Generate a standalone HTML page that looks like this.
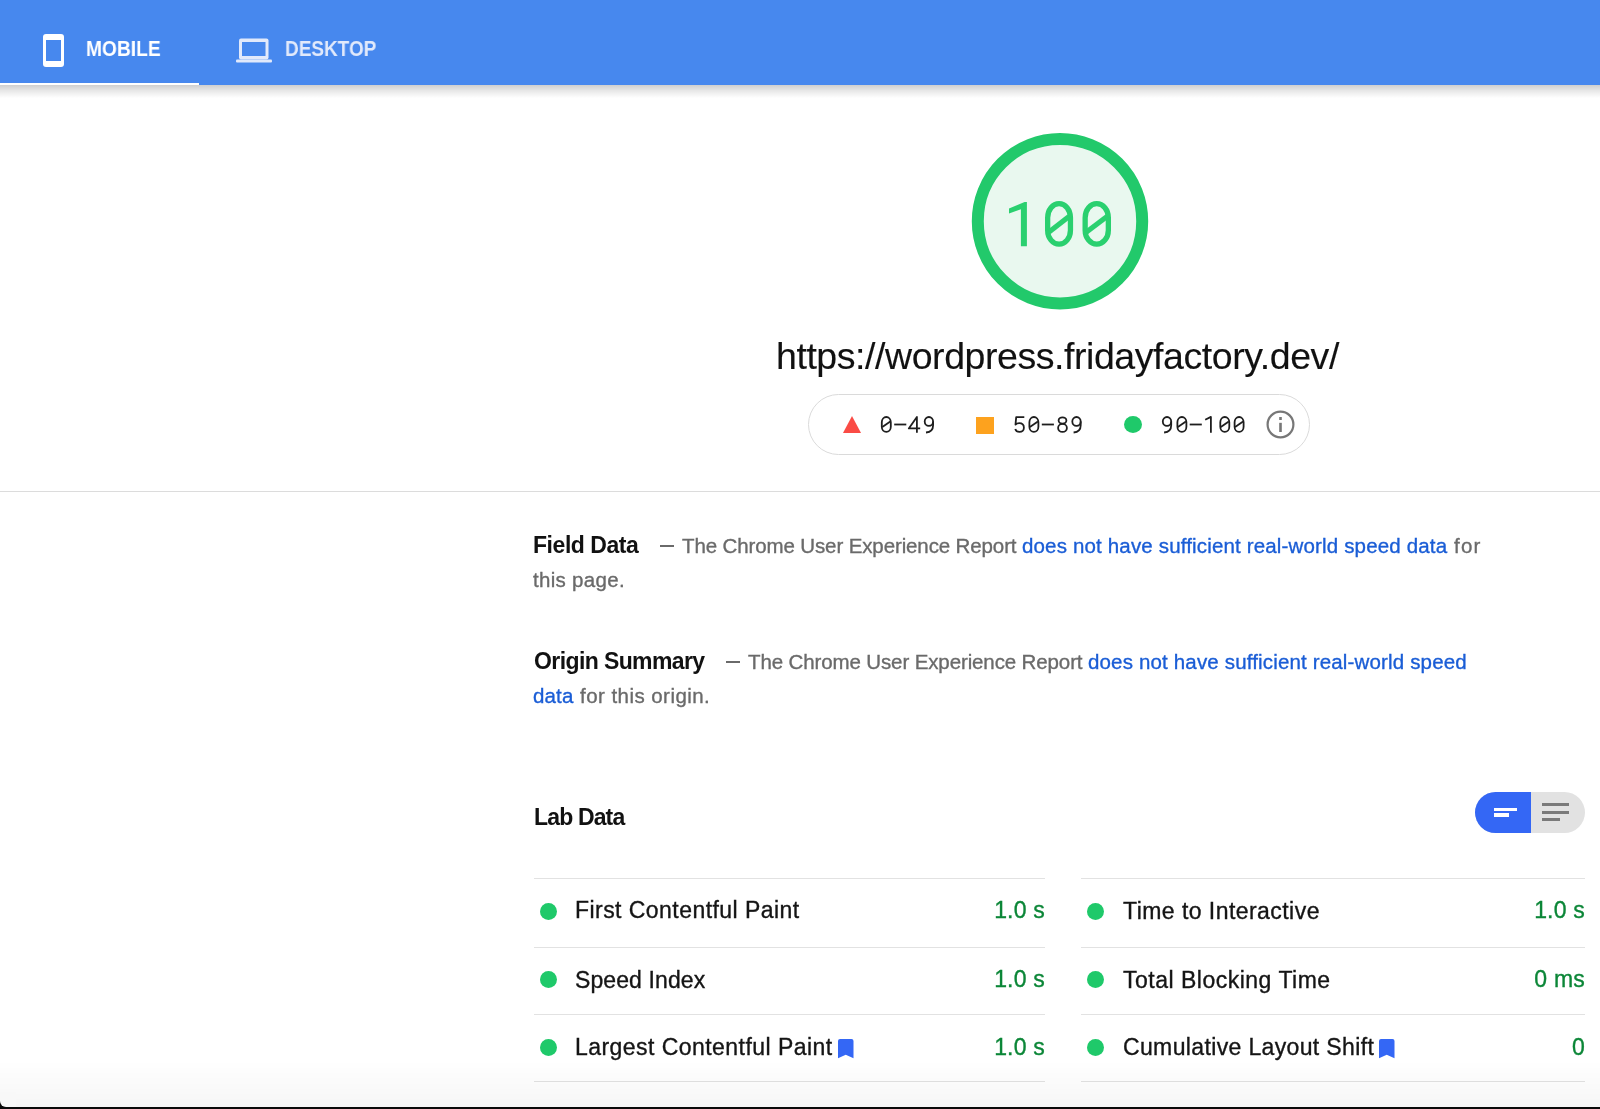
<!DOCTYPE html>
<html><head><meta charset="utf-8">
<style>
html,body{margin:0;padding:0;width:1600px;height:1109px;overflow:hidden;background:#fff;font-family:"Liberation Sans",sans-serif;position:relative}
.a{position:absolute;white-space:nowrap;line-height:1;will-change:transform}
.mono{font-family:"Liberation Mono",monospace}
.st{-webkit-text-stroke:0.35px currentColor}
#hdr{position:absolute;left:0;top:0;width:1600px;height:85px;background:#4788ee}
#shadow{position:absolute;left:0;top:85px;width:1600px;height:13px;background:linear-gradient(rgba(0,0,0,.19),rgba(0,0,0,.09) 45%,rgba(0,0,0,0))}
#uline{position:absolute;left:0;top:83px;width:199px;height:2px;background:#fff}
.tab{font-weight:bold;font-size:22px;color:#fff;transform-origin:0 0}
.g{font-size:20.5px;color:#6a6a6a}
.lk{font-size:20.5px;color:#1a5dd6}
.hd{font-size:23px;font-weight:bold;color:#111;letter-spacing:-0.45px}
.hl{position:absolute;height:1px;background:#e2e2e2}
.dot{position:absolute;width:17px;height:17px;border-radius:50%;background:#1fc96a}
.mn{font-size:23px;color:#151515;letter-spacing:0.45px}
.mv{font-size:23px;color:#0b8637;text-align:right;width:200px;letter-spacing:0.2px}
.dash{position:absolute;width:14px;height:2px;background:#6a6a6a}
.leg{font-size:24px;color:#1a1a1a}
</style></head><body>
<div id="hdr">
  <div id="uline"></div>
  <svg class="a" style="left:43px;top:34px" width="21" height="33" viewBox="0 0 21 33"><rect x="0" y="0" width="21" height="33" rx="3" fill="#fff"/><rect x="3" y="6" width="15" height="21" fill="#4788ee"/></svg>
  <div class="a tab" style="left:86px;top:38.4px;transform:scaleX(0.872)">MOBILE</div>
  <svg class="a" style="left:236px;top:38px" width="36" height="25" viewBox="0 0 36 25"><rect x="3" y="0.5" width="29.5" height="21" rx="2" fill="#e1e9fb"/><rect x="6" y="4" width="23.5" height="14" fill="#4788ee"/><rect x="0" y="21.5" width="36" height="3" rx="1" fill="#e1e9fb"/></svg>
  <div class="a tab" style="left:285px;top:38.4px;color:#e1e9fb;transform:scaleX(0.862)">DESKTOP</div>
</div>
<div id="shadow"></div>

<svg class="a" style="left:966px;top:127px" width="188" height="188" viewBox="0 0 188 188">
  <circle cx="94" cy="94.2" r="82.2" fill="#e9f8ef" stroke="#22c96b" stroke-width="12"/>
</svg>
<svg class="a" style="left:1000px;top:195px" width="120" height="60" viewBox="1000 195 120 60">
  <g fill="#2ad06f">
    <polygon points="1009,208.5 1024.6,201.9 1026.9,201.9 1026.9,246.2 1020.9,246.2 1020.9,209.3 1009,213.6"/>
  </g>
  <g fill="none" stroke="#2ad06f" stroke-width="5.3">
    <rect x="1047.65" y="203.65" width="22.8" height="40.5" rx="11.4" ry="14"/>
    <line x1="1049" y1="232" x2="1069" y2="216.5"/>
    <rect x="1085.15" y="203.65" width="23.2" height="40.5" rx="11.6" ry="14"/>
    <line x1="1086.5" y1="232" x2="1107" y2="216.5"/>
  </g>
</svg>

<div class="a" style="left:776px;top:338.3px;font-size:37.5px;-webkit-text-stroke:0.12px currentColor;color:#111;letter-spacing:-0.44px">https://wordpress.fridayfactory.dev/</div>

<div class="a" style="left:808px;top:394px;width:500px;height:59px;border:1px solid #dadada;border-radius:31px"></div>
<svg class="a" style="left:843px;top:416px" width="18" height="17" viewBox="0 0 18 17"><polygon points="9,0 18,17 0,17" fill="#fa4b45"/></svg>
<svg class="a" style="left:0;top:0" width="1600" height="500"><g fill="none" stroke="#1e1e1e" stroke-width="1.8" stroke-linejoin="round"><g transform="translate(879.10,432.8)"><rect x="2.7" y="-15.8" width="9.0" height="14.9" rx="4.5" ry="5.2"/><path d="M3.2,-5.8 L11.2,-11.2"/></g><g transform="translate(893.50,432.8)"><path d="M0.7,-8.3 L12.8,-8.3"/></g><g transform="translate(907.90,432.8)"><path d="M9,0 L9,-15.9 L0.9,-4.4 L12.3,-4.4"/></g><g transform="translate(922.30,432.8)"><ellipse cx="6.6" cy="-11.4" rx="4.2" ry="4.4"/><path d="M10.8,-11.4 L10.8,-7.6 C10.8,-2.6 7.6,-0.7 3.7,-0.3"/></g><g transform="translate(1012.30,432.8)"><path d="M12.0,-15.6 L3.9,-15.6 L3.2,-8.3 C4.2,-9.3 5.4,-9.7 6.9,-9.7 C9.8,-9.7 11.6,-7.8 11.6,-5.1 C11.6,-2.4 9.8,-0.9 7.2,-0.9 C5.1,-0.9 3.5,-1.9 2.95,-3.8"/></g><g transform="translate(1026.70,432.8)"><rect x="2.7" y="-15.8" width="9.0" height="14.9" rx="4.5" ry="5.2"/><path d="M3.2,-5.8 L11.2,-11.2"/></g><g transform="translate(1041.10,432.8)"><path d="M0.7,-8.3 L12.8,-8.3"/></g><g transform="translate(1055.50,432.8)"><ellipse cx="7" cy="-12.3" rx="3.9" ry="3.1"/><ellipse cx="7" cy="-4.9" rx="4.4" ry="4.0"/></g><g transform="translate(1069.90,432.8)"><ellipse cx="6.6" cy="-11.4" rx="4.2" ry="4.4"/><path d="M10.8,-11.4 L10.8,-7.6 C10.8,-2.6 7.6,-0.7 3.7,-0.3"/></g><g transform="translate(1160.40,432.8)"><ellipse cx="6.6" cy="-11.4" rx="4.2" ry="4.4"/><path d="M10.8,-11.4 L10.8,-7.6 C10.8,-2.6 7.6,-0.7 3.7,-0.3"/></g><g transform="translate(1174.70,432.8)"><rect x="2.7" y="-15.8" width="9.0" height="14.9" rx="4.5" ry="5.2"/><path d="M3.2,-5.8 L11.2,-11.2"/></g><g transform="translate(1189.00,432.8)"><path d="M0.7,-8.3 L12.8,-8.3"/></g><g transform="translate(1203.30,432.8)"><path d="M1.9,-13 L7.6,-15.9 L7.6,0"/></g><g transform="translate(1217.60,432.8)"><rect x="2.7" y="-15.8" width="9.0" height="14.9" rx="4.5" ry="5.2"/><path d="M3.2,-5.8 L11.2,-11.2"/></g><g transform="translate(1231.90,432.8)"><rect x="2.7" y="-15.8" width="9.0" height="14.9" rx="4.5" ry="5.2"/><path d="M3.2,-5.8 L11.2,-11.2"/></g></g></svg>
<div class="a" style="left:976px;top:416.5px;width:18px;height:16.5px;background:#fda21e"></div>

<div class="a" style="left:1124px;top:416px;width:18px;height:17px;border-radius:50%;background:#1fc96a"></div>

<svg class="a" style="left:1266px;top:410px" width="29" height="29" viewBox="0 0 29 29"><circle cx="14.5" cy="14.5" r="12.9" fill="none" stroke="#777" stroke-width="2.2"/><rect x="13.2" y="12.8" width="2.6" height="9.2" fill="#777"/><rect x="13.2" y="7" width="2.6" height="3" fill="#777"/></svg>

<div class="a" style="left:0;top:491px;width:1600px;height:1px;background:#dcdcdc"></div>

<!-- Field Data -->
<div class="a hd" style="left:533px;top:534.00px">Field Data</div>
<div class="dash" style="left:660px;top:544.7px"></div>
<div class="a g st" style="left:682px;top:536.15px;letter-spacing:-0.12px">The Chrome User Experience Report</div>
<div class="a lk st" style="left:1022px;top:536.15px;letter-spacing:0.16px">does not have sufficient real-world speed data</div>
<div class="a g st" style="left:1453.6px;top:536.15px;letter-spacing:1.2px">for</div>
<div class="a g st" style="left:533px;top:570.05px;letter-spacing:0.3px">this page.</div>

<!-- Origin Summary -->
<div class="a hd" style="left:534px;top:650.30px;letter-spacing:-0.6px">Origin Summary</div>
<div class="dash" style="left:726px;top:661px"></div>
<div class="a g st" style="left:748px;top:652.45px;letter-spacing:-0.12px">The Chrome User Experience Report</div>
<div class="a lk st" style="left:1088px;top:652.45px;letter-spacing:0.16px">does not have sufficient real-world speed</div>
<div class="a lk st" style="left:533px;top:686.45px;letter-spacing:0.16px">data</div>
<div class="a g st" style="left:580px;top:686.45px;letter-spacing:0.45px">for this origin.</div>

<div class="a hd" style="left:534px;top:806.10px;letter-spacing:-0.85px">Lab Data</div>
<div class="a" style="left:1475px;top:792px;width:110px;height:41px;border-radius:21px;background:#e2e2e2;overflow:hidden">
  <div style="position:absolute;left:0;top:0;width:56px;height:41px;background:#3467f5"></div>
  <div style="position:absolute;left:19px;top:15.5px;width:23px;height:3.5px;background:#fff"></div>
  <div style="position:absolute;left:19px;top:21px;width:15px;height:3.5px;background:#fff"></div>
  <div style="position:absolute;left:67px;top:11px;width:27px;height:3px;background:#7a7a7a"></div>
  <div style="position:absolute;left:67px;top:18.5px;width:27px;height:3px;background:#7a7a7a"></div>
  <div style="position:absolute;left:67px;top:26px;width:18px;height:3px;background:#7a7a7a"></div>
</div>

<div class="hl" style="left:534px;top:878px;width:511px"></div>
<div class="hl" style="left:534px;top:947px;width:511px"></div>
<div class="hl" style="left:534px;top:1014px;width:511px"></div>
<div class="hl" style="left:534px;top:1081px;width:511px"></div>
<div class="hl" style="left:1081px;top:878px;width:504px"></div>
<div class="hl" style="left:1081px;top:947px;width:504px"></div>
<div class="hl" style="left:1081px;top:1014px;width:504px"></div>
<div class="hl" style="left:1081px;top:1081px;width:504px"></div>

<div class="dot" style="left:539.5px;top:902.5px"></div>
<div class="a mn st" style="left:574.8px;top:899.3px">First Contentful Paint</div>
<div class="a mv st" style="left:845px;top:899px">1.0 s</div>
<div class="dot" style="left:539.5px;top:971px"></div>
<div class="a mn st" style="left:574.5px;top:968.8px;letter-spacing:0.1px">Speed Index</div>
<div class="a mv st" style="left:845px;top:968.1px">1.0 s</div>
<div class="dot" style="left:539.5px;top:1039px"></div>
<div class="a mn st" style="left:574.8px;top:1036px">Largest Contentful Paint</div>
<svg class="a" style="left:837.7px;top:1038.7px" width="16" height="20" viewBox="0 0 16 20"><path d="M0,2 Q0,0 2,0 L13.5,0 Q15.5,0 15.5,2 L15.5,19.2 L7.75,15.8 L0,19.2 Z" fill="#3467f5"/></svg>
<div class="a mv st" style="left:845px;top:1035.5px">1.0 s</div>

<div class="dot" style="left:1087px;top:902.5px"></div>
<div class="a mn st" style="left:1123px;top:899.5px">Time to Interactive</div>
<div class="a mv st" style="left:1385px;top:899px">1.0 s</div>
<div class="dot" style="left:1087px;top:971px"></div>
<div class="a mn st" style="left:1123px;top:968.5px;letter-spacing:0.5px">Total Blocking Time</div>
<div class="a mv st" style="left:1385px;top:968.1px">0 ms</div>
<div class="dot" style="left:1087px;top:1039px"></div>
<div class="a mn st" style="left:1123px;top:1035.5px;letter-spacing:0.36px">Cumulative Layout Shift</div>
<svg class="a" style="left:1379px;top:1039px" width="16" height="20" viewBox="0 0 16 20"><path d="M0,2 Q0,0 2,0 L13.5,0 Q15.5,0 15.5,2 L15.5,19.2 L7.75,15.8 L0,19.2 Z" fill="#3467f5"/></svg>
<div class="a mv st" style="left:1385px;top:1035.5px">0</div>

<div class="a" style="left:0;top:1060px;width:1600px;height:47px;background:linear-gradient(rgba(0,0,0,0),rgba(0,0,0,.035))"></div>
<div class="a" style="left:0;top:1107px;width:1600px;height:2px;background:#0a0a0a"></div>
<div class="a" style="left:0;top:1098px;width:10px;height:9px;background:#0a0a0a"></div>
<div class="a" style="left:0;top:1092px;width:16px;height:15px;border-bottom-left-radius:6px;background:#f8f8f8"></div>
</body></html>
